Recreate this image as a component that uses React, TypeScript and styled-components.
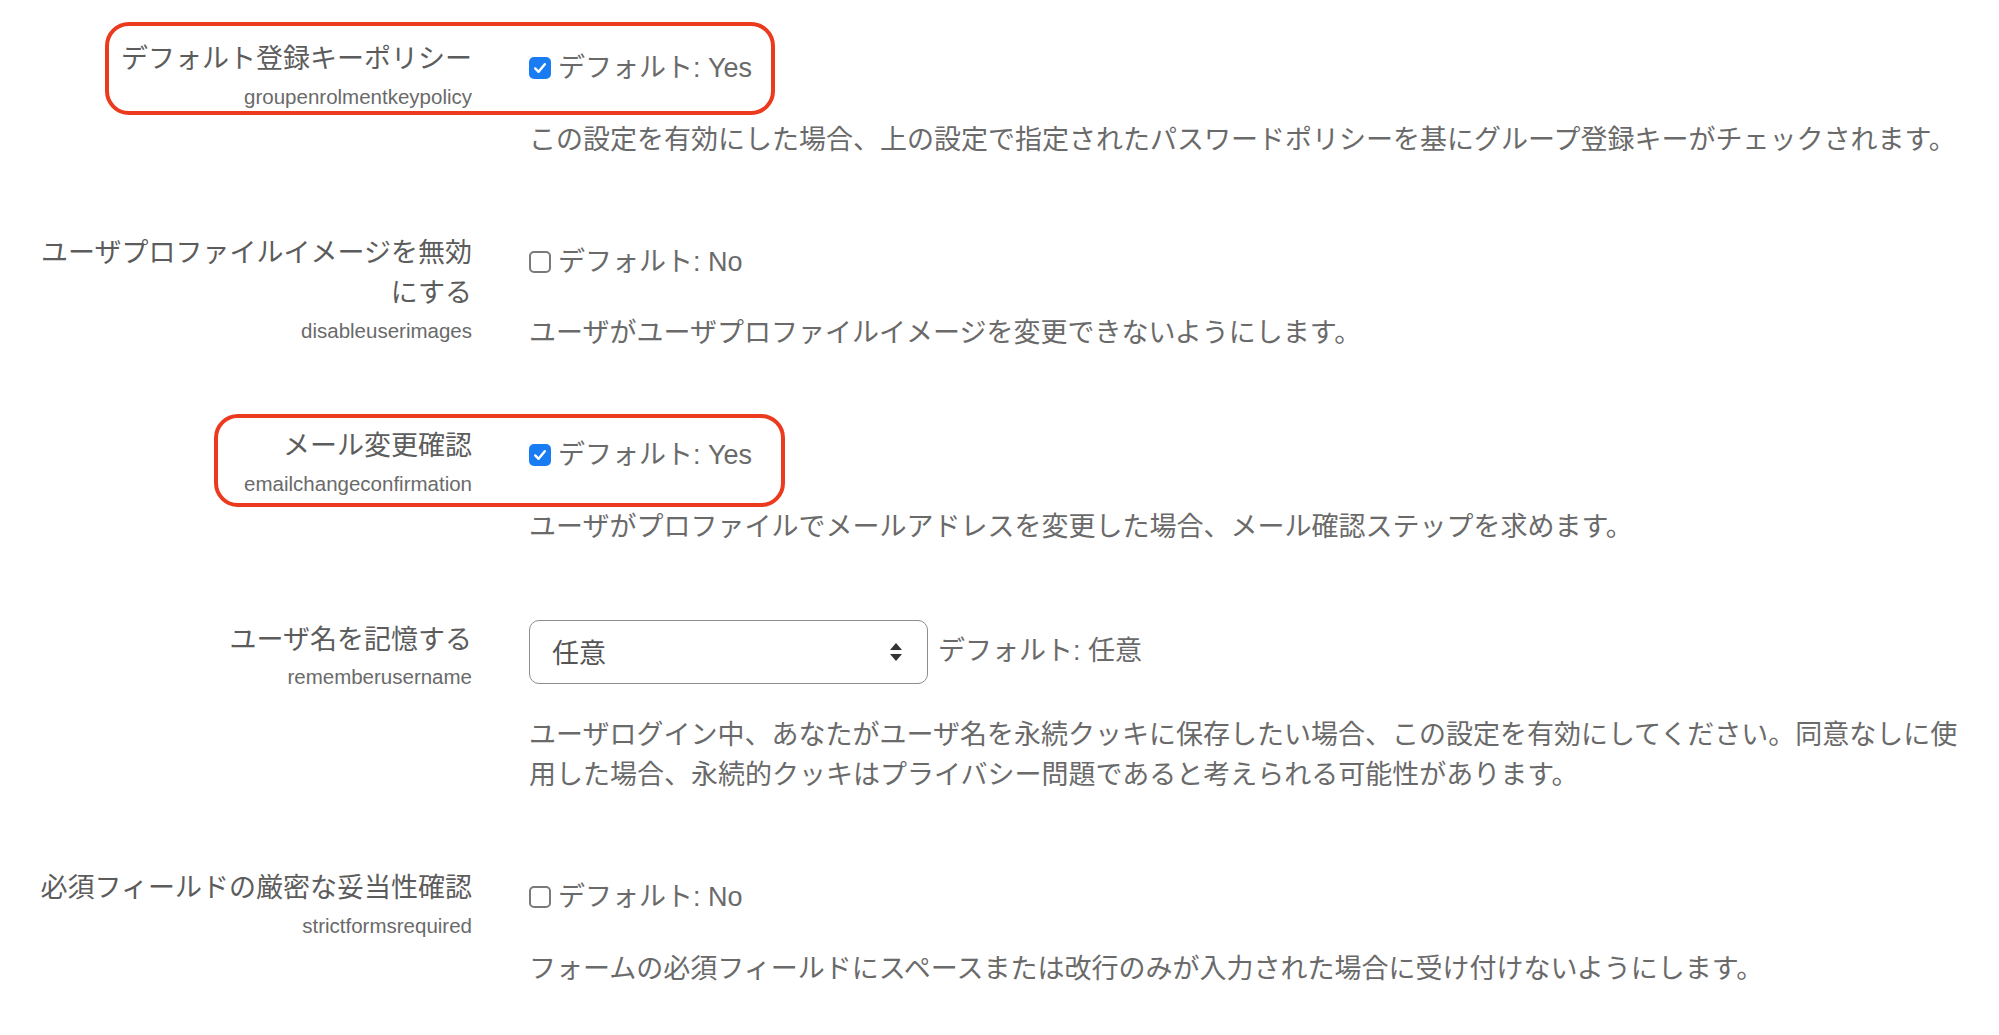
import * as React from "react";
import styled, { createGlobalStyle } from "styled-components";

const GlobalStyle = createGlobalStyle`
  body {
    margin: 0;
    background: #fff;
    font-family: "Liberation Sans", "Noto Sans CJK JP", sans-serif;
  }
`;

const Page = styled.div`
  padding: 39px 0 0 27px;
`;

const SettingRow = styled.div`
  position: relative;
  display: grid;
  grid-template-columns: 445px 1445px;
  column-gap: 57px;
  padding-bottom: 72.5px;
`;

const LabelCol = styled.div`
  text-align: right;
`;

const Title = styled.div`
  font-size: 27px;
  line-height: 40.5px;
  color: #5c5c5c;
`;

const ShortName = styled.div`
  font-size: 20.5px;
  line-height: 34px;
  color: #6a6a6a;
`;

const ContentCol = styled.div``;

const ControlLine = styled.div<{ $offset: number }>`
  display: flex;
  align-items: center;
  min-height: 40.5px;
  margin-top: ${p => p.$offset}px;
`;

const Box = styled.span<{ $checked: boolean }>`
  display: inline-flex;
  align-items: center;
  justify-content: center;
  box-sizing: border-box;
  width: 22px;
  height: 22px;
  border-radius: 5px;
  background: ${p => (p.$checked ? "#1a7cf2" : "#fff")};
  border: ${p => (p.$checked ? "none" : "2px solid #7a7a7a")};
`;

const ControlText = styled.span<{ $gap: number }>`
  margin-left: ${p => p.$gap}px;
  font-size: 27px;
  line-height: 40.5px;
  color: #6a6a6a;
`;

const SelectBox = styled.div`
  box-sizing: border-box;
  display: flex;
  align-items: center;
  justify-content: space-between;
  width: 399px;
  height: 64px;
  padding: 0 24px 0 22px;
  border: 1.5px solid #8c8c8c;
  border-radius: 10px;
  font-size: 27px;
  color: #555;
`;

const Desc = styled.div`
  margin-top: 31px;
  font-size: 27px;
  line-height: 40.5px;
  color: #6a6a6a;
`;

const Highlight = styled.div<{ $left: number; $top: number; $width: number }>`
  position: absolute;
  left: ${p => p.$left}px;
  top: ${p => p.$top}px;
  width: ${p => p.$width}px;
  height: 93px;
  box-sizing: border-box;
  border: 4px solid #ec3a1e;
  border-radius: 24px;
  pointer-events: none;
`;

const Checkbox: React.FC<{ checked: boolean }> = ({ checked }) => (
  <Box $checked={checked}>
    {checked && (
      <svg width="16" height="16" viewBox="0 0 16 16">
        <path d="M3.2 8.4 L6.6 11.8 L12.8 4.2" fill="none" stroke="#fff" strokeWidth="2.4" strokeLinecap="round" strokeLinejoin="round" />
      </svg>
    )}
  </Box>
);

const SelectArrows = () => (
  <svg width="14" height="20" viewBox="0 0 14 20">
    <path d="M7 1 L13 8 L1 8 Z" fill="#333" />
    <path d="M7 19 L13 12 L1 12 Z" fill="#333" />
  </svg>
);

interface SettingProps {
  title: string[];
  name: string;
  desc: string;
  checked?: boolean;
  select?: boolean;
  highlight?: { left: number; top: number; width: number };
}

const Setting: React.FC<SettingProps> = props => (
  <SettingRow>
    <LabelCol>
      {props.title.map(t => (
        <Title key={t}>{t}</Title>
      ))}
      <ShortName>{props.name}</ShortName>
    </LabelCol>
    <ContentCol>
      {props.select ? (
        <ControlLine $offset={0}>
          <SelectBox>
            <span>任意</span>
            <SelectArrows />
          </SelectBox>
          <ControlText $gap={10}>デフォルト: 任意</ControlText>
        </ControlLine>
      ) : (
        <ControlLine $offset={9}>
          <Checkbox checked={!!props.checked} />
          <ControlText $gap={7}>デフォルト: {props.checked ? "Yes" : "No"}</ControlText>
        </ControlLine>
      )}
      <Desc>{props.desc}</Desc>
    </ContentCol>
    {props.highlight && (
      <Highlight $left={props.highlight.left} $top={props.highlight.top} $width={props.highlight.width} />
    )}
  </SettingRow>
);

export default function App() {
  return (
    <Page>
      <GlobalStyle />
      <Setting
        title={["デフォルト登録キーポリシー"]}
        name="groupenrolmentkeypolicy"
        checked
        desc="この設定を有効にした場合、上の設定で指定されたパスワードポリシーを基にグループ登録キーがチェックされます。"
        highlight={{ left: 78, top: -17, width: 670 }}
      />
      <Setting
        title={["ユーザプロファイルイメージを無効", "にする"]}
        name="disableuserimages"
        checked={false}
        desc="ユーザがユーザプロファイルイメージを変更できないようにします。"
      />
      <Setting
        title={["メール変更確認"]}
        name="emailchangeconfirmation"
        checked
        desc="ユーザがプロファイルでメールアドレスを変更した場合、メール確認ステップを求めます。"
        highlight={{ left: 187, top: -12, width: 571 }}
      />
      <Setting
        title={["ユーザ名を記憶する"]}
        name="rememberusername"
        select
        desc="ユーザログイン中、あなたがユーザ名を永続クッキに保存したい場合、この設定を有効にしてください。同意なしに使用した場合、永続的クッキはプライバシー問題であると考えられる可能性があります。"
      />
      <Setting
        title={["必須フィールドの厳密な妥当性確認"]}
        name="strictformsrequired"
        checked={false}
        desc="フォームの必須フィールドにスペースまたは改行のみが入力された場合に受け付けないようにします。"
      />
    </Page>
  );
}
